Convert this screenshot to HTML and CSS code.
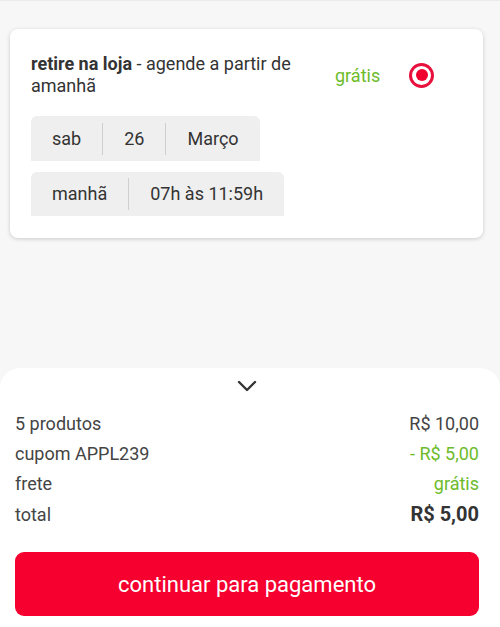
FILE: index.html
```html
<!DOCTYPE html>
<html lang="pt-BR">
<head>
  <meta charset="UTF-8">
  <meta name="viewport" content="width=device-width, initial-scale=1.0">
  <title>Entrega</title>
  <link rel="stylesheet" href="styles.css">
</head>
<body>
  <div class="page">
    <div class="card">
      <div class="card-head">
        <p class="title"><b>retire na loja</b> - agende a partir de amanhã</p>
        <span class="free">grátis</span>
        <span class="radio"><span class="dot"></span></span>
      </div>
      <div class="pill">
        <span class="seg">sab</span>
        <span class="seg">26</span>
        <span class="seg">Março</span>
      </div>
      <div class="pill">
        <span class="seg">manhã</span>
        <span class="seg">07h às 11:59h</span>
      </div>
    </div>
  </div>

  <div class="sheet">
    <div class="toggle">
      <svg width="20" height="12" viewBox="0 0 20 12">
        <path d="M2 2 L10 10 L18 2" fill="none" stroke="#333" stroke-width="2.4" stroke-linecap="round" stroke-linejoin="round"/>
      </svg>
    </div>
    <div class="row"><span>5 produtos</span><span>R$ 10,00</span></div>
    <div class="row"><span>cupom APPL239</span><span class="green">- R$ 5,00</span></div>
    <div class="row"><span>frete</span><span class="green">grátis</span></div>
    <div class="row total"><span>total</span><span class="bold">R$ 5,00</span></div>
    <button class="pay">continuar para pagamento</button>
  </div>
</body>
</html>
```

FILE: styles.css
```css
html, body {
  height: 100%;
}

body {
  margin: 0;
  font-family: Roboto, 'Liberation Sans', sans-serif;
  background-color: #f7f7f7;
  color: #333;
  display: flex;
  flex-direction: column;
  border-top: 1px solid #ececec;
  box-sizing: border-box;
}

.page {
  flex: 1;
  padding: 28px 17px 0 10px;
}

.card {
  background: #fff;
  border-radius: 8px;
  box-shadow: 0 1px 4px rgba(0, 0, 0, 0.18);
  padding: 24px 21px 22px 21px;
}

.card-head {
  display: flex;
  align-items: center;
  margin-bottom: 19px;
}

.title {
  margin: 0;
  width: 285px;
  font-size: 18px;
  line-height: 22px;
  color: #333;
}

.title b {
  font-weight: 700;
}

.free {
  margin-left: 19px;
  font-size: 18px;
  color: #6dbb2b;
}

.radio {
  margin-left: 29px;
  width: 19px;
  height: 19px;
  border: 3px solid #e8113e;
  border-radius: 50%;
  display: flex;
  align-items: center;
  justify-content: center;
}

.dot {
  width: 12px;
  height: 12px;
  border-radius: 50%;
  background: #f0002e;
}

.pill {
  display: inline-flex;
  align-items: center;
  background: #efefef;
  border-radius: 6px 6px 0 0;
  height: 45px;
  margin-bottom: 11px;
}

.pill:last-child {
  margin-bottom: 0;
  height: 44px;
}

.seg {
  font-size: 18px;
  padding: 0 21px;
  border-left: 1px solid #cfcfcf;
  line-height: 32px;
}

.seg:first-child {
  border-left: none;
}

.sheet {
  background: #fff;
  border-radius: 20px 20px 0 0;
  padding: 0 21px 11px 15px;
}

.toggle {
  height: 36px;
  padding-bottom: 4px;
  display: flex;
  justify-content: center;
  align-items: center;
}

.row {
  display: flex;
  justify-content: space-between;
  align-items: center;
  height: 30px;
  font-size: 18px;
  color: #444;
}

.row.total {
  height: 32px;
}

.green {
  color: #6dbb2b;
}

.bold {
  font-weight: 700;
  font-size: 20px;
  color: #333;
}

.pay {
  display: block;
  width: 100%;
  height: 64px;
  margin-top: 22px;
  border: none;
  border-radius: 9px;
  background: #f5002f;
  color: #fff;
  font-family: Roboto, 'Liberation Sans', sans-serif;
  font-size: 22px;
}
```
